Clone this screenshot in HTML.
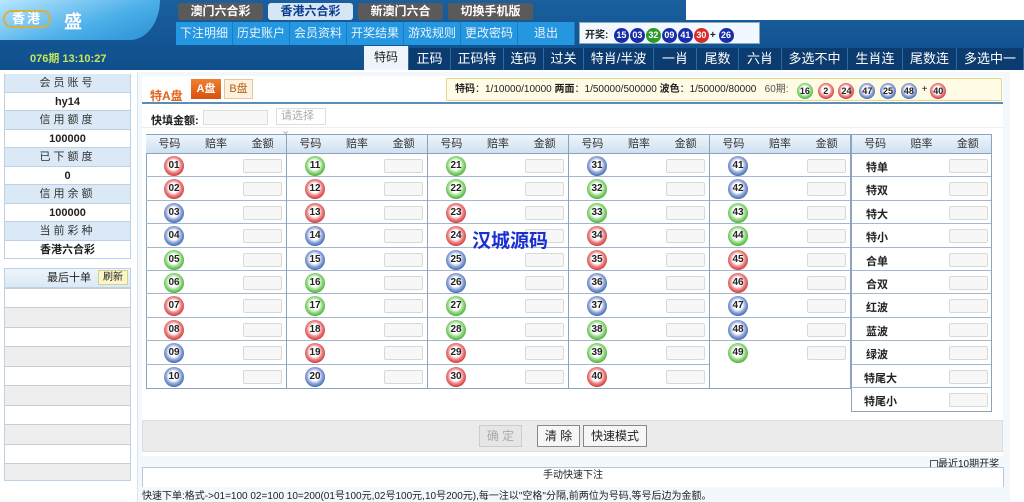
<!DOCTYPE html>
<html><head><meta charset="utf-8">
<style>
*{margin:0;padding:0;box-sizing:border-box}
body{width:1024px;height:502px;overflow:hidden;background:#fff;font-family:"Liberation Sans","Noto Sans CJK SC",sans-serif;font-size:11px;color:#222;position:relative}
.a{position:absolute}
.top{left:0;top:0;width:1024px;height:70px;background:linear-gradient(#1a5f9e,#0f4f8c)}
.logo{left:0;top:0;width:160px;height:40px;background:linear-gradient(160deg,#b8e6ff,#4aaee8 60%,#2b8fd4);border-bottom-right-radius:30px 40px}
.tt{top:3px;height:17px;width:85px;background:#5a5a5a;color:#fff;font-weight:bold;font-size:12px;text-align:center;line-height:17px;border-radius:3px}
.nav{top:22px;height:23px;width:57px;background:#2596e0;color:#e8f4ff;font-size:12px;text-align:center;line-height:23px;border-right:1px solid #1a7cc4}
.tab{top:48px;height:22px;background:#0b3b6f;color:#fff;font-size:13px;text-align:center;line-height:22px;border-right:1px solid #2a6aa8}
.sb{left:4px;width:127px;height:18.5px;text-align:center;line-height:18px;border:1px solid #bcd1e4;border-top:none}
.sh{background:#dbe8f5;letter-spacing:3px;color:#333}
.sv{background:#fff;font-weight:bold;font-size:11px}
.g{top:134px;width:141px;border:1px solid #8aa4c0;border-left:none}
.h{height:19px;background:linear-gradient(#eef5fc,#cfe0f1);display:flex;font-size:11px;line-height:19px;border-bottom:1px solid #8aa4c0;color:#333}
.h span{flex:1;text-align:center}
.r{height:23.4px;border-bottom:1px solid #a3b8cf;position:relative}
.r:last-child{border-bottom:none}
.b{position:absolute;left:18px;top:2px;width:20px;height:20px;border-radius:50%;font-size:10px;font-weight:bold;text-align:center;line-height:20px;color:#222}
.R{background:radial-gradient(circle at 48% 45%,#fff 0,#fff 32%,#e88 50%,#c33 75%,#a22 100%)}
.G{background:radial-gradient(circle at 48% 45%,#fff 0,#fff 32%,#9d8 50%,#4a3 75%,#382 100%)}
.B{background:radial-gradient(circle at 48% 45%,#fff 0,#fff 32%,#9ad 50%,#36a 75%,#258 100%)}
.i{position:absolute;left:97px;top:5px;width:39px;height:14px;border:1px solid #d8d8d8;border-radius:2px;background:#f7f7f7}
.t{position:absolute;left:14px;top:5px;font-weight:bold;font-size:11px}
.sm{width:16px;height:16px;line-height:16px;font-size:9px;top:2px;display:inline-block;position:relative;left:0;margin-right:2px}
.ob{display:inline-block;width:15px;height:15px;border-radius:50%;color:#fff;font-weight:bold;font-size:9px;text-align:center;line-height:15px;margin-right:1px}
</style></head><body>
<div class="a top"></div>
<div class="a logo"></div>
<div class="a" style="left:3px;top:10px;width:48px;height:18px;border:2px solid #d8b040;border-radius:10px;color:#fff;font-weight:bold;font-size:13px;text-align:center;line-height:14px;letter-spacing:2px">香港</div>
<div class="a" style="left:64px;top:8px;color:#fff;font-size:18px;font-weight:bold">盛</div>
<div class="a" style="left:686px;top:0;width:338px;height:20px;background:#fff"></div>
<div class="a tt" style="left:178px">澳门六合彩</div>
<div class="a tt" style="left:268px;background:#d6e6f5;color:#0b3b8f">香港六合彩</div>
<div class="a tt" style="left:358px">新澳门六合</div>
<div class="a tt" style="left:448px">切换手机版</div>
<div class="a nav" style="left:176px">下注明细</div>
<div class="a nav" style="left:233px">历史账户</div>
<div class="a nav" style="left:290px">会员资料</div>
<div class="a nav" style="left:347px">开奖结果</div>
<div class="a nav" style="left:404px">游戏规则</div>
<div class="a nav" style="left:461px">更改密码</div>
<div class="a nav" style="left:518px;width:57px">退出</div>
<div class="a" style="left:579px;top:22px;width:181px;height:22px;background:#f2f8ff;border:1px solid #8ab;font-size:10px;font-weight:bold;padding:3px 0 0 5px;white-space:nowrap">开奖: &nbsp;<span class="ob" style="background:#1a2da8">15</span><span class="ob" style="background:#1a2da8">03</span><span class="ob" style="background:#2a9a2a">32</span><span class="ob" style="background:#1a2da8">09</span><span class="ob" style="background:#1a2da8">41</span><span class="ob" style="background:#d82a2a">30</span>+ <span class="ob" style="background:#1a2da8">26</span></div>
<div class="a" style="left:30px;top:50px;color:#c8e85a;font-size:11px;font-weight:bold">076期 13:10:27</div>
<div class="a tab" style="left:364px;width:45px;background:#eef4fa;color:#222;font-size:12px;top:46px;height:24px">特码</div>
<div class="a tab" style="left:409px;width:42px">正码</div>
<div class="a tab" style="left:451px;width:53px">正码特</div>
<div class="a tab" style="left:504px;width:40px">连码</div>
<div class="a tab" style="left:544px;width:40px">过关</div>
<div class="a tab" style="left:584px;width:70px">特肖/半波</div>
<div class="a tab" style="left:654px;width:43px">一肖</div>
<div class="a tab" style="left:697px;width:42px">尾数</div>
<div class="a tab" style="left:739px;width:43px">六肖</div>
<div class="a tab" style="left:782px;width:66px">多选不中</div>
<div class="a tab" style="left:848px;width:55px">生肖连</div>
<div class="a tab" style="left:903px;width:54px">尾数连</div>
<div class="a tab" style="left:957px;width:67px">多选中一</div>
<!-- sidebar -->
<div class="a" style="left:4px;top:74px;width:127px;border-top:1px solid #bcd1e4"></div>
<div class="a sb sh" style="top:74px">会员账号</div>
<div class="a sb sv" style="top:92.5px">hy14</div>
<div class="a sb sh" style="top:111px">信用额度</div>
<div class="a sb sv" style="top:129.5px">100000</div>
<div class="a sb sh" style="top:148px">已下额度</div>
<div class="a sb sv" style="top:166.5px">0</div>
<div class="a sb sh" style="top:185px">信用余额</div>
<div class="a sb sv" style="top:203.5px">100000</div>
<div class="a sb sh" style="top:222px">当前彩种</div>
<div class="a sb sv" style="top:240.5px">香港六合彩</div>
<div class="a" style="left:4px;top:268px;width:127px;height:213px;border:1px solid #bcd1e4;background:repeating-linear-gradient(#eee 0,#eee 19px,#ccc 19px,#ccc 20px,#fff 20px,#fff 38px,#ccc 38px,#ccc 39px)"></div>
<div class="a" style="left:4px;top:268px;width:127px;height:20px;background:linear-gradient(#eef5fc,#dbe8f5);border:1px solid #bcd1e4;font-size:11px;line-height:18px;padding-left:42px">最后十单</div>
<div class="a" style="left:98px;top:270px;width:30px;height:15px;background:#fdf6c8;border:1px solid #d6cf90;font-size:10px;text-align:center;line-height:13px">刷新</div>
<!-- main -->
<div class="a" style="left:137px;top:72px;width:873px;height:430px;background:#f3f8fc;border-left:1px solid #d8e4ef"></div>
<div class="a" style="left:142px;top:76px;width:861px;height:380px;background:#fff"></div>
<div class="a" style="left:150px;top:87px;color:#e2621a;font-weight:bold;font-size:12px">特A盘</div>
<div class="a" style="left:191px;top:79px;width:30px;height:20px;background:linear-gradient(#f08030,#d85010);color:#fff;font-weight:bold;text-align:center;line-height:20px;font-size:11px">A盘</div>
<div class="a" style="left:224px;top:79px;width:29px;height:20px;background:#fdf2e0;border:1px solid #e0c8a0;color:#b86010;text-align:center;line-height:18px;font-size:11px">B盘</div>
<div class="a" style="left:446px;top:78px;width:556px;height:23px;background:#fffbe4;border:1px solid #e2d890;font-size:10px;line-height:22px;padding-left:8px;white-space:nowrap"><b>特码</b>：1/10000/10000 <b>两面</b>：1/50000/500000 <b>波色</b>：1/50000/80000 &nbsp; <span style="color:#555">60期:</span> &nbsp; <span class="b G sm">16</span> <span class="b R sm">2</span> <span class="b R sm">24</span> <span class="b B sm">47</span> <span class="b B sm">25</span> <span class="b B sm">48</span> + <span class="b R sm">40</span></div>
<div class="a" style="left:142px;top:102px;width:861px;height:2px;background:#5b8db5"></div>
<div class="a" style="left:142px;top:104px;width:861px;height:24px;border-bottom:1px solid #eee"></div>
<div class="a" style="left:151px;top:112px;font-weight:bold;font-size:11px">快填金额:</div>
<div class="a" style="left:203px;top:110px;width:65px;height:15px;border:1px solid #ddd;background:#f7f7f7"></div>
<div class="a" style="left:276px;top:108px;width:50px;height:17px;border:1px solid #ddd;color:#aaa;font-size:11px;line-height:15px;padding-left:4px">请选择 ⌄</div>
<div class="a" style="left:146px;top:134px;width:1px;height:254px;background:#8aa4c0"></div>

<div class="a g" style="left:146px"><div class="h"><span>号码</span><span>赔率</span><span>金额</span></div>
<div class="r"><span class="b R">01</span><span class="i"></span></div><div class="r"><span class="b R">02</span><span class="i"></span></div><div class="r"><span class="b B">03</span><span class="i"></span></div><div class="r"><span class="b B">04</span><span class="i"></span></div><div class="r"><span class="b G">05</span><span class="i"></span></div><div class="r"><span class="b G">06</span><span class="i"></span></div><div class="r"><span class="b R">07</span><span class="i"></span></div><div class="r"><span class="b R">08</span><span class="i"></span></div><div class="r"><span class="b B">09</span><span class="i"></span></div><div class="r"><span class="b B">10</span><span class="i"></span></div></div>
<div class="a g" style="left:287px"><div class="h"><span>号码</span><span>赔率</span><span>金额</span></div>
<div class="r"><span class="b G">11</span><span class="i"></span></div><div class="r"><span class="b R">12</span><span class="i"></span></div><div class="r"><span class="b R">13</span><span class="i"></span></div><div class="r"><span class="b B">14</span><span class="i"></span></div><div class="r"><span class="b B">15</span><span class="i"></span></div><div class="r"><span class="b G">16</span><span class="i"></span></div><div class="r"><span class="b G">17</span><span class="i"></span></div><div class="r"><span class="b R">18</span><span class="i"></span></div><div class="r"><span class="b R">19</span><span class="i"></span></div><div class="r"><span class="b B">20</span><span class="i"></span></div></div>
<div class="a g" style="left:428px"><div class="h"><span>号码</span><span>赔率</span><span>金额</span></div>
<div class="r"><span class="b G">21</span><span class="i"></span></div><div class="r"><span class="b G">22</span><span class="i"></span></div><div class="r"><span class="b R">23</span><span class="i"></span></div><div class="r"><span class="b R">24</span><span class="i"></span></div><div class="r"><span class="b B">25</span><span class="i"></span></div><div class="r"><span class="b B">26</span><span class="i"></span></div><div class="r"><span class="b G">27</span><span class="i"></span></div><div class="r"><span class="b G">28</span><span class="i"></span></div><div class="r"><span class="b R">29</span><span class="i"></span></div><div class="r"><span class="b R">30</span><span class="i"></span></div></div>
<div class="a g" style="left:569px"><div class="h"><span>号码</span><span>赔率</span><span>金额</span></div>
<div class="r"><span class="b B">31</span><span class="i"></span></div><div class="r"><span class="b G">32</span><span class="i"></span></div><div class="r"><span class="b G">33</span><span class="i"></span></div><div class="r"><span class="b R">34</span><span class="i"></span></div><div class="r"><span class="b R">35</span><span class="i"></span></div><div class="r"><span class="b B">36</span><span class="i"></span></div><div class="r"><span class="b B">37</span><span class="i"></span></div><div class="r"><span class="b G">38</span><span class="i"></span></div><div class="r"><span class="b G">39</span><span class="i"></span></div><div class="r"><span class="b R">40</span><span class="i"></span></div></div>
<div class="a g" style="left:710px;height:255px"><div class="h"><span>号码</span><span>赔率</span><span>金额</span></div>
<div class="r"><span class="b B">41</span><span class="i"></span></div><div class="r"><span class="b B">42</span><span class="i"></span></div><div class="r"><span class="b G">43</span><span class="i"></span></div><div class="r"><span class="b G">44</span><span class="i"></span></div><div class="r"><span class="b R">45</span><span class="i"></span></div><div class="r"><span class="b R">46</span><span class="i"></span></div><div class="r"><span class="b B">47</span><span class="i"></span></div><div class="r"><span class="b B">48</span><span class="i"></span></div><div class="r" style="border-bottom:none"><span class="b G">49</span><span class="i"></span></div></div>
<div class="a g" style="left:851px;border-left:1px solid #8aa4c0"><div class="h"><span>号码</span><span>赔率</span><span>金额</span></div>
<div class="r"><span class="t">特单</span><span class="i"></span></div><div class="r"><span class="t">特双</span><span class="i"></span></div><div class="r"><span class="t">特大</span><span class="i"></span></div><div class="r"><span class="t">特小</span><span class="i"></span></div><div class="r"><span class="t">合单</span><span class="i"></span></div><div class="r"><span class="t">合双</span><span class="i"></span></div><div class="r"><span class="t">红波</span><span class="i"></span></div><div class="r"><span class="t">蓝波</span><span class="i"></span></div><div class="r"><span class="t">绿波</span><span class="i"></span></div><div class="r"><span class="t" style="left:12px">特尾大</span><span class="i"></span></div><div class="r"><span class="t" style="left:12px">特尾小</span><span class="i"></span></div></div>
<div class="a" style="left:472px;top:226px;color:#1a2fd0;font-size:19px;font-weight:bold;letter-spacing:0px">汉城源码</div>
<!-- buttons -->
<div class="a" style="left:142px;top:420px;width:861px;height:32px;background:#ebebeb;border:1px solid #ddd"></div>
<div class="a" style="left:479px;top:425px;width:43px;height:22px;background:#e6e6e6;border:1px solid #ccc;color:#aaa;font-size:12px;text-align:center;line-height:20px">确 定</div>
<div class="a" style="left:537px;top:425px;width:43px;height:22px;background:#f6f6f6;border:1px solid #888;font-size:12px;text-align:center;line-height:20px">清 除</div>
<div class="a" style="left:583px;top:425px;width:64px;height:22px;background:#f6f6f6;border:1px solid #888;font-size:12px;text-align:center;line-height:20px">快速模式</div>
<div class="a" style="left:930px;top:455px;font-size:10px"><span style="display:inline-block;width:8px;height:8px;border:1px solid #555;vertical-align:-1px"></span>最近10期开奖</div>
<div class="a" style="left:142px;top:467px;width:862px;height:20px;background:#fff;border:1px solid #b8c8d8;border-bottom:none;text-align:center;font-size:10px;line-height:16px">手动快速下注</div>
<div class="a" style="left:142px;top:487px;font-size:10px;white-space:nowrap">快速下单:格式-&gt;01=100 02=100 10=200(01号100元,02号100元,10号200元),每一注以"空格"分隔,前两位为号码,等号后边为金额。</div>
</body></html>
